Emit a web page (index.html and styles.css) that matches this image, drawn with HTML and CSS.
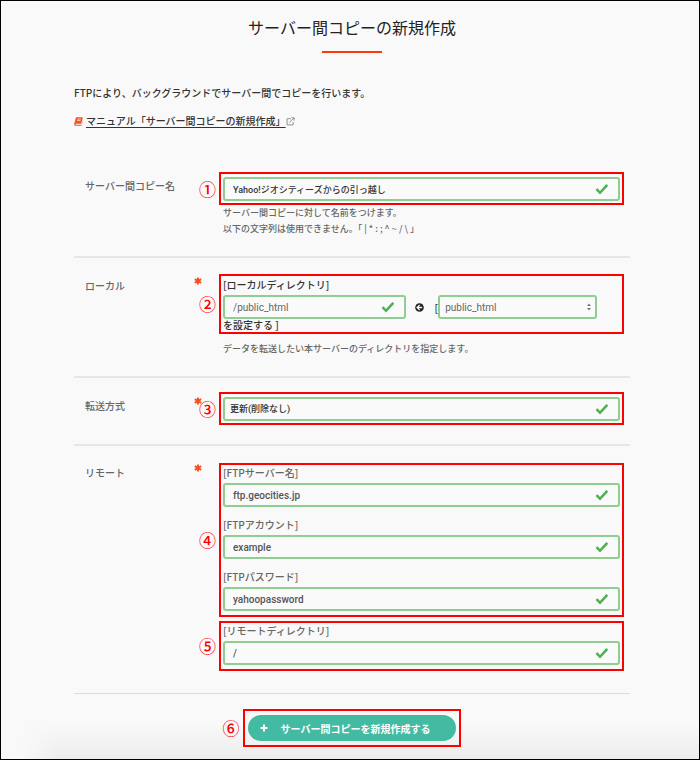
FILE: index.html
```html
<!DOCTYPE html>
<html lang="ja">

<head>
    <meta charset="UTF-8">
    <title>サーバー間コピーの新規作成</title>
    <link rel="stylesheet" href="styles.css">
</head>

<body>
    <svg class="sprite" aria-hidden="true">
        <symbol id="check" viewBox="0 0 14 12">
            <path d="M1.5 6.2 L5 9.8 L12.3 1.8" fill="none" stroke="#4caf50" stroke-width="2.5"/>
        </symbol>
        <symbol id="star" viewBox="0 0 8 8">
            <path d="M4 0.4 V7.6 M0.8 2.2 L7.2 5.8 M0.8 5.8 L7.2 2.2" stroke="#f4511e" stroke-width="1.9"/>
        </symbol>
    </svg>

    <div id="container">
        <h1 class="pageTitle">サーバー間コピーの新規作成</h1>

        <p class="intro">FTPにより、バックグラウンドでサーバー間でコピーを行います。</p>
        <p class="manual">
            <svg class="bookIcon" viewBox="0 0 10 10">
                <path d="M3 0.3 H9 Q10 0.4 9.7 1.4 L8 7.4 H1.9 Q1.2 8.3 2.2 8.5 H8.3 L9.8 3.2 V4 L8.5 8.8 Q8.3 9.7 7.4 9.7 H1.6 Q0 9.5 0.2 7.8 L2 1.2 Q2.3 0.4 3 0.3 Z" fill="#f4511e"/>
                <path d="M3.7 2.3 H7.7 M3.2 4 H7.2" stroke="#f9f9f9" stroke-width="0.8"/>
            </svg>
            <a href="#">マニュアル「サーバー間コピーの新規作成」</a>
            <svg class="linkIcon" viewBox="0 0 10 10">
                <path d="M5.4 1.9 H1.2 V8.8 H7.9 V5.5 M3.8 6.1 L8.8 1.1 M6 0.9 H9.1 V4" fill="none" stroke="#888" stroke-width="1"/>
            </svg>
        </p>

        <form>
            <div class="row single">
                <div class="rowLabel">
                    <label for="copyName">サーバー間コピー名</label>
                </div>
                <div class="rowBody">
                    <div class="frame">
                        <span class="number">①</span>
                        <div class="field">
                            <input class="small" type="text" id="copyName" value="Yahoo!ジオシティーズからの引っ越し">
                            <svg class="check"><use href="#check"/></svg>
                        </div>
                    </div>
                    <p class="hint">サーバー間コピーに対して名前をつけます。<br>以下の文字列は使用できません。「 | * : ; ^ ~ / \ 」</p>
                </div>
            </div>

            <div class="row local">
                <div class="rowLabel">
                    <span>ローカル</span>
                    <svg class="star"><use href="#star"/></svg>
                </div>
                <div class="rowBody">
                    <div class="frame">
                        <span class="number">②</span>
                        <label class="fieldName" for="localDir">[ローカルディレクトリ]</label>
                        <div class="pair">
                            <div class="field">
                                <input type="text" id="localDir" value="/public_html">
                                <svg class="check"><use href="#check"/></svg>
                            </div>
                            <svg class="arrowIcon" viewBox="0 0 9 9">
                                <circle cx="4.5" cy="4.5" r="4.3" fill="#222"/>
                                <path d="M4.7 1.9 L2.1 4.5 L4.7 7.1 M2.4 4.5 H7.2" fill="none" stroke="#f9f9f9" stroke-width="1.3"/>
                            </svg>
                            <label for="baseDir">[</label>
                            <div class="field selectField">
                                <select id="baseDir">
                                    <option>public_html</option>
                                </select>
                                <svg class="updown" viewBox="0 0 6 8">
                                    <path d="M1 3 L3 0.5 L5 3 Z M1 5 L3 7.5 L5 5 Z" fill="#777"/>
                                </svg>
                            </div>
                        </div>
                        <div class="after">を設定する ]</div>
                    </div>
                    <p class="hint">データを転送したい本サーバーのディレクトリを指定します。</p>
                </div>
            </div>

            <div class="row single method">
                <div class="rowLabel">
                    <label for="method">転送方式</label>
                    <svg class="star"><use href="#star"/></svg>
                </div>
                <div class="rowBody">
                    <div class="frame">
                        <span class="number">③</span>
                        <div class="field">
                            <select class="small" id="method">
                                <option>更新(削除なし)</option>
                            </select>
                            <svg class="check"><use href="#check"/></svg>
                        </div>
                    </div>
                </div>
            </div>

            <div class="row remote">
                <div class="rowLabel">
                    <span>リモート</span>
                    <svg class="star"><use href="#star"/></svg>
                </div>
                <div class="rowBody">
                    <div class="frame">
                        <span class="number">④</span>
                        <div>
                            <label class="fieldName" for="ftpServer">[FTPサーバー名]</label>
                            <div class="field">
                                <input type="text" id="ftpServer" value="ftp.geocities.jp">
                                <svg class="check"><use href="#check"/></svg>
                            </div>
                        </div>
                        <div>
                            <label class="fieldName" for="ftpAccount">[FTPアカウント]</label>
                            <div class="field">
                                <input type="text" id="ftpAccount" value="example">
                                <svg class="check"><use href="#check"/></svg>
                            </div>
                        </div>
                        <div>
                            <label class="fieldName" for="ftpPassword">[FTPパスワード]</label>
                            <div class="field">
                                <input type="text" id="ftpPassword" value="yahoopassword">
                                <svg class="check"><use href="#check"/></svg>
                            </div>
                        </div>
                    </div>
                    <div class="frame">
                        <span class="number">⑤</span>
                        <div>
                            <label class="fieldName" for="remoteDir">[リモートディレクトリ]</label>
                            <div class="field">
                                <input type="text" id="remoteDir" value="/">
                                <svg class="check"><use href="#check"/></svg>
                            </div>
                        </div>
                    </div>
                </div>
            </div>

            <div class="submitRow">
                <div class="frame">
                    <span class="number">⑥</span>
                    <button type="submit" class="submit">
                        <svg class="plusIcon" viewBox="0 0 8 8"><path d="M4 0.5 V7.5 M0.5 4 H7.5" stroke="#fff" stroke-width="2"/></svg>
                        サーバー間コピーを新規作成する
                    </button>
                </div>
            </div>
        </form>
    </div>
</body>

</html>
```

FILE: styles.css
```css
* {
    box-sizing: border-box;
}
body {
    margin: 0;
    font-family: "Noto Sans CJK JP", sans-serif;
    font-size: 10px;
    font-weight: 500;
    color: #333;
    background-color: #f9f9f9;
}
.sprite {
    display: none;
}
#container {
    min-height: 100vh;
    padding: 14px 69px 12px 73px;
    border: 1px solid #000;
    background:
        linear-gradient(to right, #f9f9f9 20px, transparent 60px),
        linear-gradient(to top, #ececec, #f9f9f9 36px);
}

.pageTitle {
    margin: 0;
    font-size: 16px;
    font-weight: 400;
    line-height: 24px;
    text-align: center;
    color: #222;
}
.pageTitle::after {
    content: "";
    display: block;
    width: 60px;
    height: 2px;
    margin: 12px auto 30px;
    background-color: #f93b0c;
}
.intro {
    margin: 0;
    line-height: 20px;
}
.manual {
    display: flex;
    align-items: center;
    margin: 8px 0 25px;
    line-height: 20px;
}
.manual a {
    color: #333;
    text-underline-offset: 2px;
}
.bookIcon {
    width: 9px;
    height: 9px;
    margin-right: 3px;
}
.linkIcon {
    width: 9px;
    height: 9px;
}

.row {
    display: flex;
    padding: 16px 6px 19px 0;
    border-bottom: 2px solid #e6e6e6;
}
.row.method {
    padding-top: 14px;
}
.row.remote {
    padding-top: 17px;
    padding-bottom: 22px;
    border-bottom: 1px solid #ddd;
}
.rowLabel {
    display: flex;
    flex: 0 0 145px;
    justify-content: space-between;
    padding: 2px 17px 0 11px;
    line-height: 20px;
    color: #666;
}
.single .rowLabel {
    padding-top: 4px;
}
.remote .rowLabel {
    padding-top: 0;
}
.star {
    width: 8px;
    height: 8px;
    margin-top: 1px;
}
.rowBody {
    flex: 1;
    min-width: 0;
}

.frame {
    position: relative;
    padding: 3px 2px 2px;
    border: 2px solid #f00;
}
.local .frame {
    padding: 1px 2px;
}
.remote .frame {
    display: grid;
    gap: 10px;
    padding: 0 2px 4px;
}
.remote .frame + .frame {
    margin-top: 4px;
}
.number {
    position: absolute;
    top: 50%;
    right: 100%;
    margin-right: 5px;
    transform: translateY(-50%);
    font-size: 17px;
    font-weight: 500;
    line-height: 22px;
    color: #f00;
}

.fieldName {
    display: block;
    margin-bottom: 2px;
    line-height: 16px;
}
.remote .fieldName {
    color: #666;
}
.field {
    position: relative;
}
.field input,
.field select {
    display: block;
    width: 100%;
    height: 24px;
    padding: 0 30px 0 8px;
    border: 2px solid #8fcd91;
    border-radius: 3px;
    background-color: #fafafa;
    font-family: Roboto, "Noto Sans CJK JP", sans-serif;
    font-size: 10px;
    font-weight: 500;
    color: #555;
    appearance: none;
}
.field select {
    padding-left: 5px;
}
.field .small {
    font-size: 9px;
    color: #333;
}
.check {
    position: absolute;
    top: 6px;
    right: 11px;
    width: 14px;
    height: 12px;
}
.hint {
    margin: 0;
    padding-left: 4px;
    font-size: 9px;
    line-height: 16px;
    color: #666;
}
.local .hint {
    margin-top: 7px;
}

.pair {
    display: flex;
    align-items: center;
}
.pair .field {
    flex: 0 0 46%;
}
.pair .selectField {
    flex-basis: 40%;
}
.pair input,
.pair select {
    color: #666;
    font-weight: 400;
}
.arrowIcon {
    width: 9px;
    height: 9px;
    margin: 0 11px 0 9px;
}
.updown {
    position: absolute;
    top: 8px;
    right: 5px;
    width: 6px;
    height: 8px;
}
.after {
    line-height: 12px;
}

.submitRow {
    display: flex;
    justify-content: center;
    padding-top: 15px;
}
.submitRow .frame {
    padding: 4px 3px;
}
.submit {
    display: flex;
    align-items: center;
    height: 26px;
    padding: 0 26px 0 12px;
    border: 0;
    border-radius: 13px;
    background-color: #43bba3;
    font-family: inherit;
    font-size: 10px;
    font-weight: 700;
    color: #fff;
}
.plusIcon {
    width: 8px;
    height: 8px;
    margin-right: 13px;
}
```
